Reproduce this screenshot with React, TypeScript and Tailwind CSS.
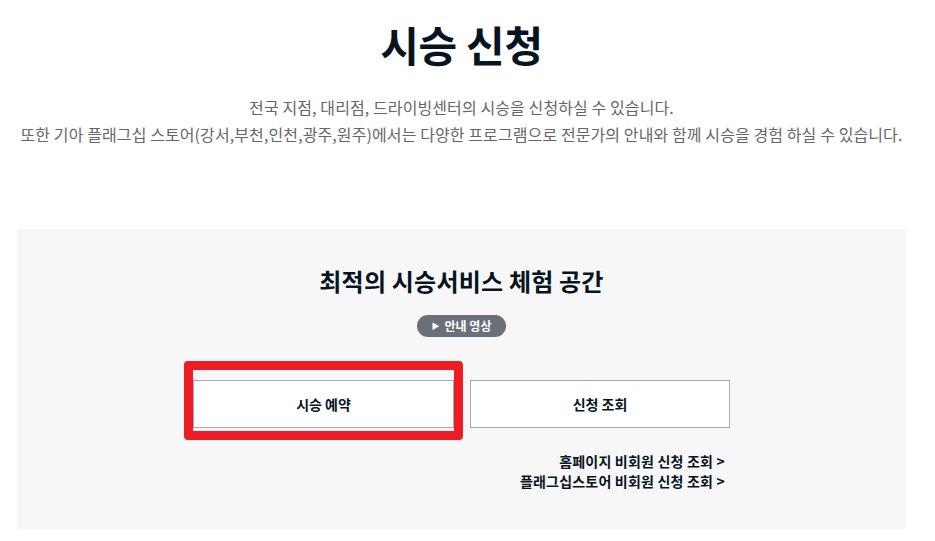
export default function App() {
  const font = { fontFamily: '"Noto Sans CJK KR", "Noto Sans", sans-serif' };
  return (
    <div className="w-[935px] h-[541px] bg-white overflow-hidden" style={font}>
      <div className="w-[923px]">
        <h1 className="pt-[14px] text-center text-[42px] leading-[60px] font-bold text-[#05141f] tracking-[-0.3px]">
          시승 신청
        </h1>
        <div className="mt-[20px] text-center text-[16px] leading-[27px] text-[#666] tracking-[0.1px]">
          <p>전국 지점, 대리점, 드라이빙센터의 시승을 신청하실 수 있습니다.</p>
          <p>또한 기아 플래그십 스토어(강서,부천,인천,광주,원주)에서는 다양한 프로그램으로 전문가의 안내와 함께 시승을 경험 하실 수 있습니다.</p>
        </div>
        <div className="mx-[17px] mt-[81px] h-[300px] bg-[#f7f7f7] flex flex-col items-center pt-[34px]">
          <h2 className="text-[24px] leading-[36px] font-bold text-[#05141f] tracking-[0.2px]">
            최적의 시승서비스 체험 공간
          </h2>
          <div className="mt-[16px] h-[22px] px-[15px] rounded-full bg-[#697077] text-white text-[12px] font-bold flex items-center gap-[5px]">
            <span className="text-[8px]">▶</span>
            <span>안내 영상</span>
          </div>
          <div className="mt-[43px] flex gap-[16px]">
            <div className="relative">
              <div className="absolute -left-[9px] -right-[9px] -top-[19px] -bottom-[12px] border-[9px] border-[#ee1c25] rounded-[4px] pointer-events-none" />
              <button className="w-[261px] h-[48px] bg-white border border-[#a9a9a9] text-[14px] font-bold text-[#05141f]">
                시승 예약
              </button>
            </div>
            <button className="w-[260px] h-[48px] bg-white border border-[#a9a9a9] text-[14px] font-bold text-[#05141f]">
              신청 조회
            </button>
          </div>
          <div className="mt-[23px] w-[537px] flex flex-col items-end text-[14px] leading-[20px] font-bold text-[#05141f] pr-[5px] tracking-[0.2px]">
            <span>홈페이지 비회원 신청 조회 &gt;</span>
            <span>플래그십스토어 비회원 신청 조회 &gt;</span>
          </div>
        </div>
      </div>
    </div>
  );
}
